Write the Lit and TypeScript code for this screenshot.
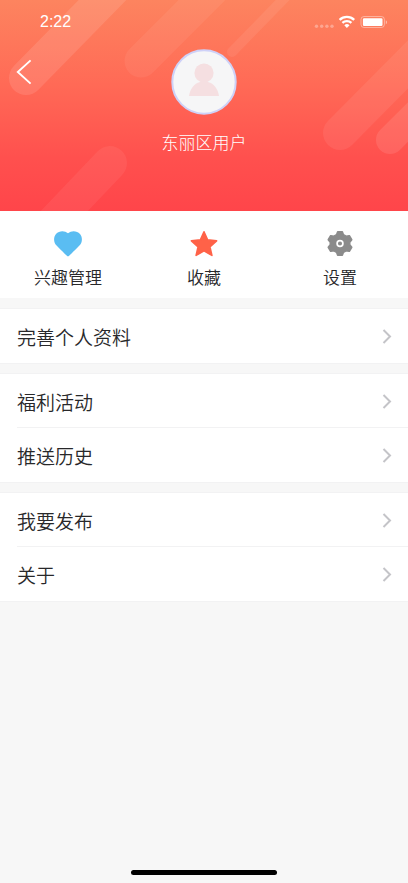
import { LitElement, html, svg, css } from "lit";
import { customElement, property } from "lit/decorators.js";

const chevron = svg`<path d="M1.5 1 8 7.5 1.5 14" fill="none" stroke="#c4c4c8" stroke-width="2"/>`;

@customElement("status-bar")
class StatusBar extends LitElement {
  static styles = css`
    :host {
      display: flex;
      align-items: center;
      justify-content: space-between;
      height: 44px;
      padding: 0 20px 0 40px;
      color: #fff;
      font-size: 16px;
      line-height: 20px;
    }
    .status {
      display: block;
    }
  `;
  render() {
    return html`
      <time>2:22</time>
      <svg class="status" width="74" height="16" viewBox="0 0 74 16" aria-hidden="true">
        <g fill="#fff" fill-opacity=".32">
          <circle cx="2.5" cy="12.2" r="1.7" /><circle cx="7.7" cy="12.2" r="1.7" />
          <circle cx="12.9" cy="12.2" r="1.7" /><circle cx="18" cy="12.2" r="1.7" />
        </g>
        <g fill="none" stroke="#fff" stroke-width="2.3">
          <path d="M25.6 5.800a10.500 10.500 0 0 1 14.600 0" />
          <path d="M28.4 8.900a6.500 6.500 0 0 1 9 0" />
        </g>
        <path d="M30.300 11.200a3.800 3.800 0 0 1 5.200 0L32.900 13.900Z" fill="#fff" />
        <rect x="47" y="2.500" width="23.400" height="11" rx="3" fill="none" stroke="#fff" stroke-opacity=".4" />
        <rect x="48.900" y="4.200" width="19.600" height="7.800" rx="1.200" fill="#fff" />
        <path d="M71.800 6.200c1.600.6 1.600 3.400 0 4Z" fill="#fff" fill-opacity=".5" />
      </svg>
    `;
  }
}

@customElement("profile-header")
class ProfileHeader extends LitElement {
  static styles = css`
    :host {
      display: block;
      position: relative;
      overflow: hidden;
      background: linear-gradient(#fd845f, #ff6a56 40%, #ff504e 75%, #ff454a);
      color: #fff;
    }
    .stripes {
      position: absolute;
      inset: 0;
      width: 100%;
      height: 100%;
    }
    .content {
      position: relative;
    }
    .profile {
      display: grid;
      grid-template-columns: 48px 1fr 48px;
      align-items: start;
      padding: 5px 0 55px;
    }
    .back {
      display: flex;
      width: 48px;
      height: 46px;
      align-items: center;
      justify-content: center;
      border: 0;
      padding: 0;
      background: none;
      color: inherit;
    }
    .user {
      display: flex;
      flex-direction: column;
      align-items: center;
      gap: 17px;
    }
    .avatar {
      display: block;
    }
    .name {
      margin: 0;
      font-size: 17px;
      line-height: 24px;
      font-weight: 300;
    }
  `;
  render() {
    return html`
      <svg class="stripes" viewBox="0 0 408 211" preserveAspectRatio="xMidYMid slice" aria-hidden="true">
        <g stroke="#fff" stroke-linecap="round">
          <path d="M26 78 126-24" stroke-width="34" stroke-opacity=".11" />
          <path d="M141 61 226-24" stroke-width="33" stroke-opacity=".06" />
          <path d="M232 52 306-24" stroke-width="10" stroke-opacity=".07" />
          <path d="M340 133 440 32" stroke-width="34" stroke-opacity=".07" />
          <path d="M390 140 450 80" stroke-width="28" stroke-opacity=".1" />
          <path d="M110 163 32 245" stroke-width="34" stroke-opacity=".06" />
        </g>
      </svg>
      <div class="content">
        <status-bar></status-bar>
        <div class="profile">
          <button class="back" aria-label="返回">
            <svg width="16" height="26" viewBox="0 0 16 26">
              <path d="M14.600 1.400 1.800 13l12.800 11.600" fill="none" stroke="#fff" stroke-width="1.900" />
            </svg>
          </button>
          <div class="user">
            <svg class="avatar" width="66" height="66" viewBox="0 0 66 66" aria-hidden="true">
              <circle cx="33" cy="33" r="31.700" fill="#f6f6f7" stroke="#ced1f8" stroke-width="2" />
              <g fill="#f5dfe1">
                <circle cx="33" cy="24" r="9.600" />
                <path d="M18 47c1-7 5-12.500 11-14h8c6 1.500 10 7 11 14Z" />
              </g>
            </svg>
            <p class="name">东丽区用户</p>
          </div>
        </div>
      </div>
    `;
  }
}

@customElement("menu-group")
class MenuGroup extends LitElement {
  @property({ attribute: false }) items: string[] = [];
  static styles = css`
    :host {
      display: block;
      background: #fff;
      box-shadow: 0 0 0 1px #f2f2f3;
    }
    .list {
      margin: 0;
      padding: 0 0 0 17px;
      list-style: none;
    }
    .item + .item {
      box-shadow: 0 -1px #f2f2f3;
    }
    .link {
      display: flex;
      align-items: center;
      justify-content: space-between;
      height: 54px;
      padding-right: 16px;
      color: #28282a;
      font-size: 19px;
      font-weight: 350;
      text-decoration: none;
    }
  `;
  render() {
    return html`<ul class="list">
      ${this.items.map(
        (item) => html`<li class="item">
          <a class="link" href="#"
            >${item}<svg width="10" height="15" viewBox="0 0 10 15" aria-hidden="true">${chevron}</svg></a
          >
        </li>`
      )}
    </ul>`;
  }
}

const shortcuts = [
  {
    label: "兴趣管理",
    icon: svg`<path fill="#5abdf2" d="M15 28.400C14.300 28.400 13.500 27.500 3.800 17.800C.5 14.500.2 9.500 3 6C6 2.600 11.500 2.200 15 5.200C18.500 2.200 24 2.600 27 6C29.800 9.500 29.500 14.500 26.200 17.800C16.500 27.500 15.700 28.400 15 28.400Z"/>`,
  },
  {
    label: "收藏",
    icon: svg`<path fill="#ff6248" stroke="#ff6248" stroke-width="1.600" stroke-linejoin="round" d="M15 3.800 18.600 11.900 27.600 12.800 20.900 18.800 22.900 27.400 15 22.900 7.100 27.400 9.100 18.800 2.400 12.800 11.400 11.900Z"/>`,
  },
  {
    label: "设置",
    icon: svg`<path fill="#8b8b8b" stroke="#8b8b8b" stroke-width="1.400" stroke-linejoin="round" d="M12.600 3.700h4.800l1.100 3 2.600 1.500 3.300-.6 2.400 4.100-2 2.600v2.400l2 2.600-2.400 4.100-3.300-.6-2.600 1.500-1.100 3h-4.800l-1.100-3-2.600-1.500-3.300.6-2.400-4.100 2-2.600v-2.400l-2-2.600 2.400-4.100 3.300.6 2.600-1.500Z"/><circle cx="15" cy="15.500" r="2.900" fill="none" stroke="#fff" stroke-width="1.700"/>`,
  },
];

@customElement("app-root")
class AppRoot extends LitElement {
  static styles = css`
    :host {
      display: flex;
      flex-direction: column;
      position: relative;
      min-height: 100vh;
      background: #f7f7f7;
      font-family: "Liberation Sans", "Noto Sans CJK SC", sans-serif;
    }
    .shortcuts {
      display: grid;
      grid-template-columns: repeat(3, 1fr);
      padding: 17px 0 7px;
      background: #fff;
    }
    .shortcut {
      display: flex;
      flex-direction: column;
      align-items: center;
      gap: 9px;
      color: #28282a;
      font-size: 17px;
      font-weight: 350;
      line-height: 24px;
      text-decoration: none;
    }
    .menu {
      display: grid;
      gap: 11px;
      padding-top: 11px;
    }
    .home {
      position: absolute;
      bottom: 8px;
      left: 50%;
      width: 146px;
      height: 5px;
      border-radius: 3px;
      background: #000;
      transform: translateX(-50%);
    }
  `;
  render() {
    return html`
      <profile-header></profile-header>
      <nav class="shortcuts">
        ${shortcuts.map(
          (s) => html`<a class="shortcut" href="#">
            <svg width="30" height="30" viewBox="0 0 30 30" aria-hidden="true">${s.icon}</svg>
            <span>${s.label}</span>
          </a>`
        )}
      </nav>
      <main class="menu">
        <menu-group .items=${["完善个人资料"]}></menu-group>
        <menu-group .items=${["福利活动", "推送历史"]}></menu-group>
        <menu-group .items=${["我要发布", "关于"]}></menu-group>
      </main>
      <div class="home"></div>
    `;
  }
}
